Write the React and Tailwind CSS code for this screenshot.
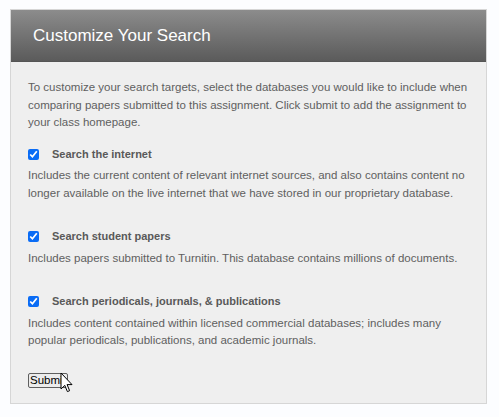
import React from 'react';

const options = [
  {
    id: 'internet',
    label: 'Search the internet',
    desc: 'Includes the current content of relevant internet sources, and also contains content no longer available on the live internet that we have stored in our proprietary database.',
  },
  {
    id: 'students',
    label: 'Search student papers',
    desc: 'Includes papers submitted to Turnitin. This database contains millions of documents.',
  },
  {
    id: 'periodicals',
    label: 'Search periodicals, journals, & publications',
    desc: 'Includes content contained within licensed commercial databases; includes many popular periodicals, publications, and academic journals.',
  },
];

function Cursor() {
  return (
    <svg className="absolute left-[32px] top-[0px] pointer-events-none" width="13" height="22" viewBox="0 0 13 22">
      <path d="M1 1 L1 17 L4.8 13.4 L7.4 19.6 L9.6 18.7 L7.1 12.6 L12 12.6 Z" fill="#fff" stroke="#000" strokeWidth="1" strokeLinejoin="round" />
    </svg>
  );
}

export default function App() {
  return (
    <div className="min-h-screen bg-[#fcfdff] pt-[9px] pl-[10px]" style={{ fontFamily: '"Liberation Sans", Arial, sans-serif' }}>
      <div className="w-[477px] border border-[#d6d6d6] bg-[#efefef]">
        <div className="h-[52px] flex items-center pl-[22px] bg-gradient-to-b from-[#8c8c8c] to-[#5b5b5b] border-b border-[#555]">
          <h1 className="text-white text-[17px] leading-none">Customize Your Search</h1>
        </div>

        <div className="px-[17px] pt-[17px] pb-[16px] text-[11.5px] leading-[17.5px] text-[#606060]">
          <p>
            To customize your search targets, select the databases you would like to include when comparing papers
            submitted to this assignment. Click submit to add the assignment to your class homepage.
          </p>

          <div className="mt-[14px] flex flex-col gap-[26px]">
            {options.map((opt) => (
              <div key={opt.id}>
                <label htmlFor={opt.id} className="flex items-center gap-[13px] mb-[4px]">
                  <input
                    id={opt.id}
                    type="checkbox"
                    defaultChecked
                    className="w-[11px] h-[11px] m-0 accent-[#0a6cf5]"
                  />
                  <span className="font-bold text-[11px] text-[#595959]">{opt.label}</span>
                </label>
                <p>{opt.desc}</p>
              </div>
            ))}
          </div>

          <div className="relative mt-[22px] h-[15px]">
            <button
              type="submit"
              className="h-[15px] px-[1px] text-[11.5px] leading-none text-black bg-[#ececec] border border-[#5f5f5f] rounded-[2px]"
            >
              Submit
            </button>
            <Cursor />
          </div>
        </div>
      </div>
    </div>
  );
}
